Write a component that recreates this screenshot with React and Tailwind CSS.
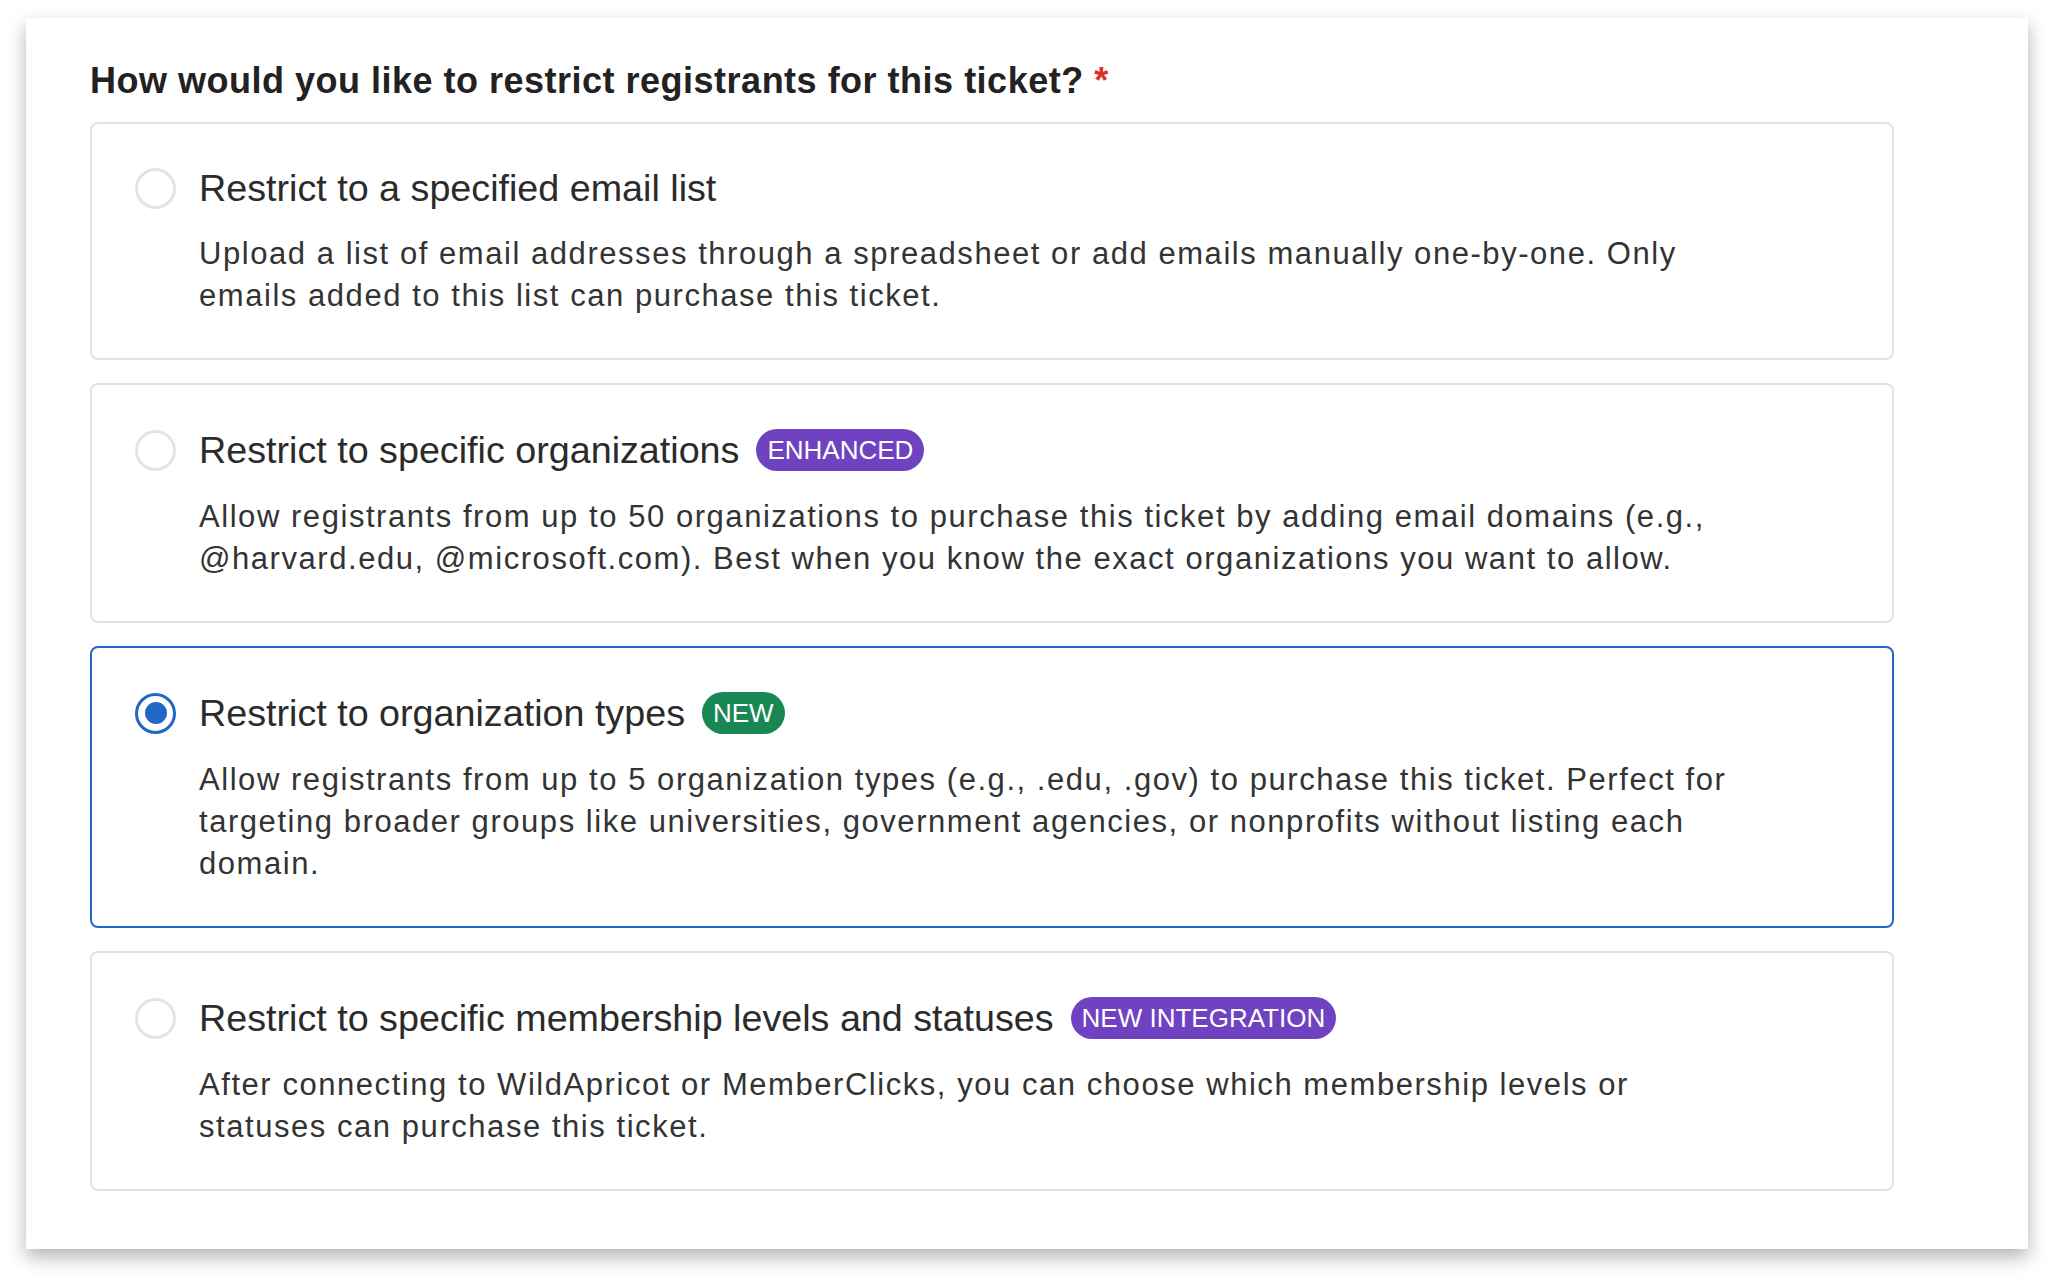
const options = [
  {
    id: 'email',
    title: 'Restrict to a specified email list',
    desc: 'Upload a list of email addresses through a spreadsheet or add emails manually one-by-one. Only emails added to this list can purchase this ticket.',
  },
  {
    id: 'orgs',
    title: 'Restrict to specific organizations',
    badge: 'ENHANCED',
    badgeColor: 'bg-[#6f42c1]',
    desc: 'Allow registrants from up to 50 organizations to purchase this ticket by adding email domains (e.g., @harvard.edu, @microsoft.com). Best when you know the exact organizations you want to allow.',
  },
  {
    id: 'types',
    title: 'Restrict to organization types',
    badge: 'NEW',
    badgeColor: 'bg-[#198754]',
    desc: 'Allow registrants from up to 5 organization types (e.g., .edu, .gov) to purchase this ticket. Perfect for targeting broader groups like universities, government agencies, or nonprofits without listing each domain.',
  },
  {
    id: 'members',
    title: 'Restrict to specific membership levels and statuses',
    badge: 'NEW INTEGRATION',
    badgeColor: 'bg-[#6f42c1]',
    desc: 'After connecting to WildApricot or MemberClicks, you can choose which membership levels or statuses can purchase this ticket.',
  },
];

const Radio = ({ checked }) =>
  checked ? (
    <span className="w-[41px] h-[41px] rounded-full border-[3px] border-[#2167c5] flex items-center justify-center shrink-0">
      <span className="w-[22px] h-[22px] rounded-full bg-[#2167c5]"></span>
    </span>
  ) : (
    <span className="w-[41px] h-[41px] rounded-full border-[3px] border-[#e4e4e4] bg-white shrink-0"></span>
  );

export default function App() {
  const selected = 'types';

  return (
    <div
      className="min-h-screen bg-white pt-[18px] pl-[26px]"
      style={{ fontFamily: '"Liberation Sans", Arial, sans-serif' }}
    >
      <div className="w-[2002px] bg-white shadow-[0_8px_18px_rgba(0,0,0,0.3)] pt-[43px] pl-[64px] pb-[58px]">
        <h2 className="text-[36px] leading-[40px] font-bold text-[#222222] tracking-[0.5px]">
          How would you like to restrict registrants for this ticket?{' '}
          <span className="text-[#d9302c]">*</span>
        </h2>

        <div className="mt-[21px] w-[1804px] flex flex-col gap-[23px]">
          {options.map((opt) => {
            const isOn = opt.id === selected;
            return (
              <div
                key={opt.id}
                className={`rounded-[8px] border-2 pt-[36px] pb-[41px] pl-[43px] ${
                  isOn ? 'border-[#2167c5]' : 'border-[#e2e2e2]'
                }`}
              >
                <div className="flex items-center min-h-[56px]">
                  <Radio checked={isOn} />
                  <span className="ml-[23px] text-[37.7px] leading-[56px] text-[#2b2b2b]">{opt.title}</span>
                  {opt.badge && (
                    <span
                      className={`ml-[17px] my-[8px] h-[42px] px-[11px] rounded-full ${opt.badgeColor} text-white text-[26px] leading-[42px] flex items-center`}
                    >
                      {opt.badge}
                    </span>
                  )}
                </div>
                <p className="mt-[17px] ml-[64px] max-w-[1550px] text-[31px] leading-[42px] tracking-[1.55px] text-[#333333]">
                  {opt.desc}
                </p>
              </div>
            );
          })}
        </div>
      </div>
    </div>
  );
}
